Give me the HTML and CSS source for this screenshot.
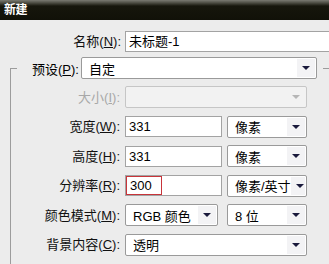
FILE: index.html
```html
<!DOCTYPE html>
<html lang="zh-CN">
<head>
    <meta charset="UTF-8">
    <title>新建</title>
    <link rel="stylesheet" href="styles.css">
</head>
<body>
    <div class="titlebar">新建</div>
    <div class="dialog">
        <div class="name-row">
            <label class="lbl">名称(<u>N</u>):</label>
            <div class="field name-field">未标题-1</div>
        </div>
        <fieldset class="doc">
            <legend class="preset">
                <label class="preset-lbl">预设(<u>P</u>):</label>
                <div class="select preset-select"><span>自定</span><i class="arrow"></i></div>
            </legend>
            <div class="grid">
                <label class="lbl off">大小(<u>I</u>):</label>
                <div class="select span2 disabled"><span></span><i class="arrow"></i></div>

                <label class="lbl">宽度(<u>W</u>):</label>
                <div class="field">331</div>
                <div class="select"><span>像素</span><i class="arrow"></i></div>

                <label class="lbl">高度(<u>H</u>):</label>
                <div class="field">331</div>
                <div class="select"><span>像素</span><i class="arrow"></i></div>

                <label class="lbl">分辨率(<u>R</u>):</label>
                <div class="field"><span class="mark">300</span></div>
                <div class="select"><span>像素/英寸</span><i class="arrow"></i></div>

                <label class="lbl">颜色模式(<u>M</u>):</label>
                <div class="select mode"><span>RGB 颜色</span><i class="arrow"></i></div>
                <div class="select"><span>8 位</span><i class="arrow"></i></div>

                <label class="lbl">背景内容(<u>C</u>):</label>
                <div class="select span2"><span>透明</span><i class="arrow"></i></div>
            </div>
        </fieldset>
    </div>
</body>
</html>
```

FILE: styles.css
```css
body {
    margin: 0;
    width: 329px;
    height: 264px;
    overflow: hidden;
    background: #ececec;
    font-family: "Liberation Sans", "Noto Sans CJK SC", sans-serif;
    font-size: 13px;
    color: #000;
}
u {
    text-decoration: underline;
    text-underline-offset: 1px;
}
.titlebar {
    height: 20px;
    line-height: 21px;
    padding-left: 4px;
    background: linear-gradient(#7a7a72 0, #4a4a40 3px, #16160c 6px, #111108 100%);
    color: #fff;
    font-weight: bold;
    font-size: 12px;
    letter-spacing: -0.5px;
}
.dialog {
    padding-top: 11px;
}
.name-row {
    display: flex;
    align-items: center;
    gap: 4px;
}
.name-row .lbl {
    width: 121px;
    flex: none;
}
.lbl {
    text-align: right;
    white-space: nowrap;
    line-height: 21px;
    color: #111;
}
.lbl.off {
    color: #a8a8a8;
}
.field {
    height: 19px;
    line-height: 19px;
    padding: 0 3px;
    background: #fff;
    border: 1px solid #a3a3a3;
    white-space: nowrap;
    overflow: hidden;
}
.name-field {
    width: 210px;
    flex: none;
}
.mark {
    display: inline-block;
    height: 17px;
    line-height: 17px;
    margin-left: -3px;
    padding: 0 3px;
    width: 28px;
    border: 1px solid #c8343a;
}
.doc {
    margin: 5px 0 0 10px;
    padding: 0 0 20px 0;
    min-width: 0;
    border: none;
    border-top: 1px solid #9c9c9c;
    border-left: 1px solid #9c9c9c;
}
.preset {
    display: flex;
    align-items: center;
    margin-left: 6px;
    padding: 0 6px 0 15px;
}
.preset-lbl {
    width: 45px;
    margin-right: 4px;
    white-space: nowrap;
}
.preset-select {
    width: 236px;
}
.select {
    display: flex;
    align-items: center;
    justify-content: space-between;
    box-sizing: border-box;
    height: 22px;
    padding-left: 7px;
    background: #fff;
    border: 1px solid #9a9a9a;
    border-radius: 2px;
    white-space: nowrap;
}
.arrow {
    width: 18px;
    height: 18px;
    margin-right: 1px;
    background: #f3f3f5;
    position: relative;
}
.arrow::after {
    content: "";
    position: absolute;
    left: 5px;
    top: 7px;
    border-left: 4px solid transparent;
    border-right: 4px solid transparent;
    border-top: 4px solid #1a1a3c;
}
.select.disabled {
    background: #f2f2f2;
    border-color: #c6c6c6;
}
.select.disabled .arrow {
    background: transparent;
}
.select.disabled .arrow::after {
    border-top-color: #b6b6b6;
}
.grid {
    display: grid;
    grid-template-columns: 109px 97px 80px;
    column-gap: 5px;
    row-gap: 7.5px;
    align-items: center;
    margin-top: 7px;
}
.grid .field {
    height: 19px;
}
.span2 {
    grid-column: span 2;
}
.mode {
    width: 93px;
}
```
